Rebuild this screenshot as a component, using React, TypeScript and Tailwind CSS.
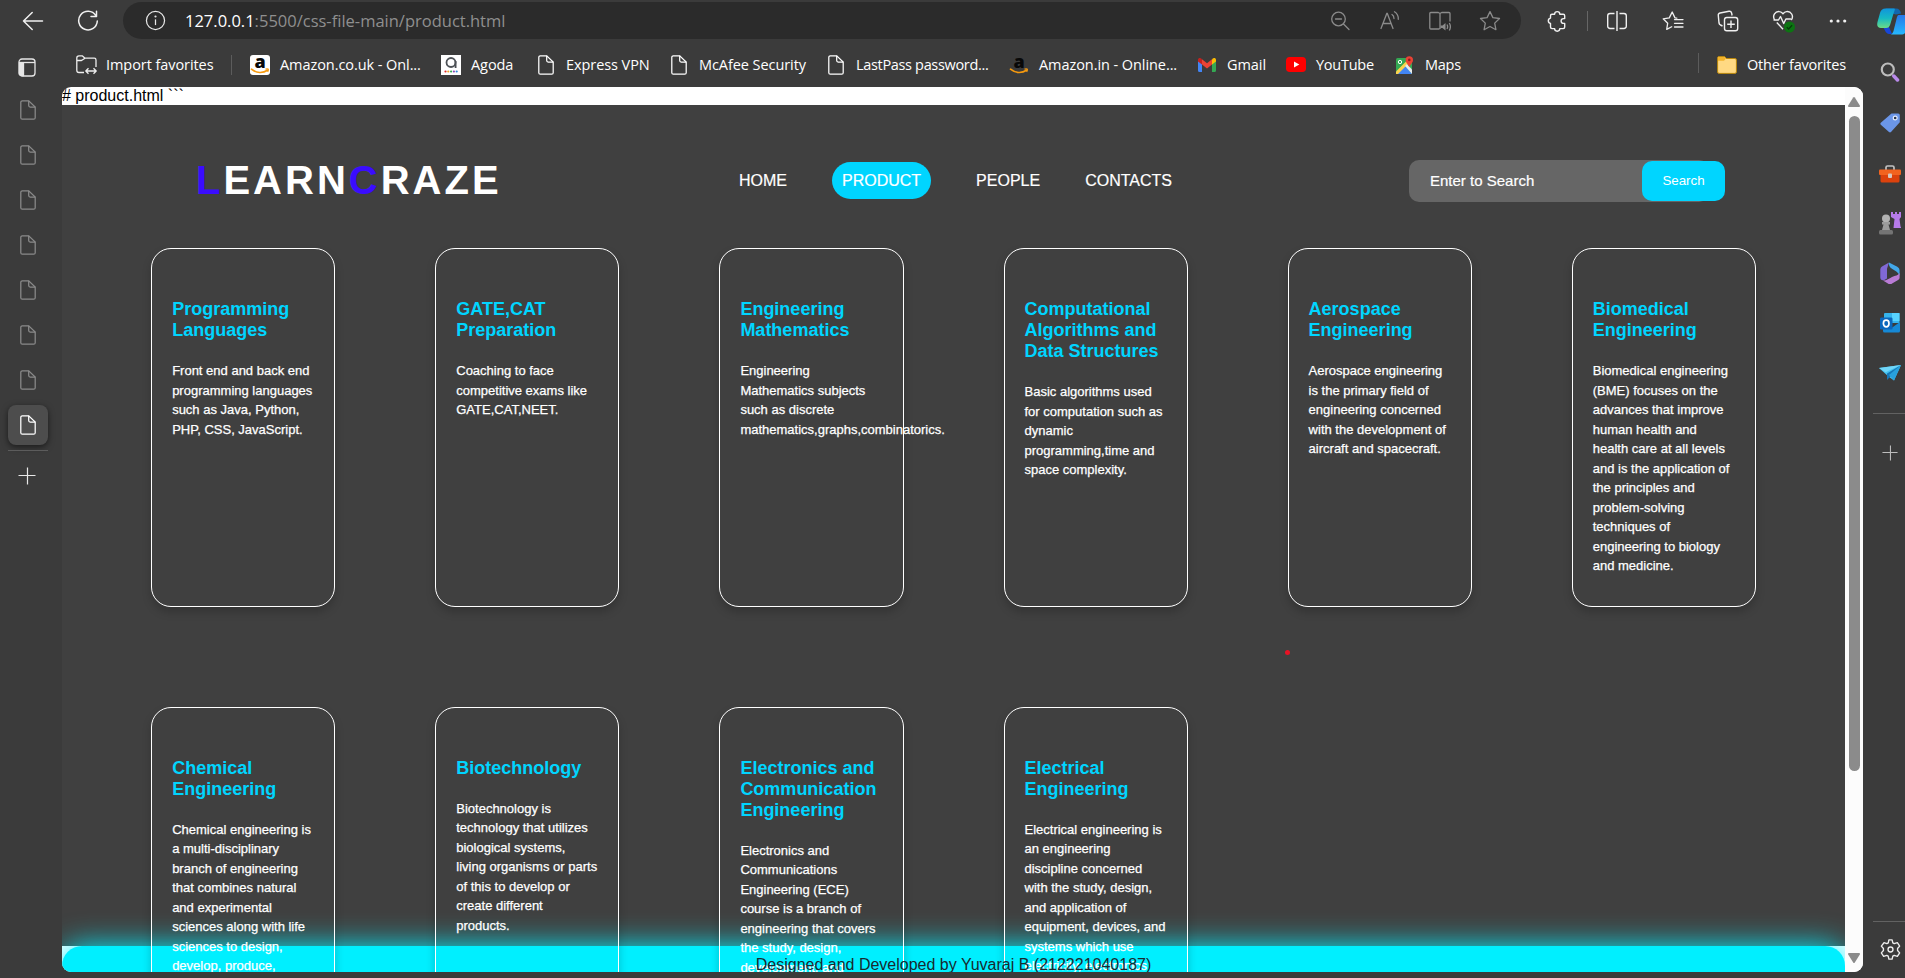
import React from "react";

type IconProps = { className?: string };

function FileIcon({ className = "" }: IconProps) {
  return (
    <svg viewBox="0 0 16 20" width="16" height="20" fill="none" stroke="currentColor" strokeWidth="1.25" className={className}>
      <path d="M2.3.8h6.4l6.5 6.3v10.6a1.5 1.5 0 0 1-1.5 1.5H2.3A1.5 1.5 0 0 1 .8 17.700V2.300A1.500 1.500 0 0 1 2.300.8Z" />
      <path d="M8.700.8v4.800a1.500 1.500 0 0 0 1.500 1.500h5" />
    </svg>
  );
}

function PlusIcon({ className = "" }: IconProps) {
  return (
    <svg viewBox="0 0 18 18" width="18" height="18" stroke="currentColor" strokeWidth="1.2" className={className}>
      <path d="M9.500 .5v17M.5 8.500h17" />
    </svg>
  );
}

function StarShape({ lines = false }: { lines?: boolean }) {
  return lines ? (
    <svg viewBox="0 0 22 22" width="22" height="22" fill="none" stroke="currentColor" strokeWidth="1.3" strokeLinejoin="round" strokeLinecap="round">
      <path d="M14.800 8.200 13 7.900 10.200 2 7.300 7.900 1.200 8.800l4.500 4.400-1 6.200 5-2.700" />
      <path d="M12.500 9.600h8.500M12.500 13.300h8.500M12.500 17h8.500" />
    </svg>
  ) : (
    <svg viewBox="0 0 22 22" width="22" height="22" fill="none" stroke="currentColor" strokeWidth="1.3" strokeLinejoin="round">
      <path d="m11 1.600 2.900 6 6.600.9-4.800 4.600 1.200 6.600-5.900-3.200-5.900 3.200 1.200-6.600L1.500 8.500l6.600-.9Z" />
    </svg>
  );
}

function AddressBar() {
  return (
    <div className="flex h-[37px] w-[1398px] items-center rounded-full bg-[#2b2b2b] pl-[22px] pr-[20px]">
      <svg viewBox="0 0 22 22" width="21" height="21" fill="none" stroke="#e8e8e8" strokeWidth="1.3">
        <circle cx="11" cy="11" r="9.500" />
        <path d="M11 9.800v6" />
        <circle cx="11" cy="6.800" r=".5" fill="#e8e8e8" />
      </svg>
      <div className="ml-[19px] flex-1 whitespace-nowrap text-[16.5px] leading-5 text-[#8f8f8f]">
        <span className="text-white">127.0.0.1</span>:5500/css-file-main/product.html
      </div>
      <div className="flex items-center gap-[28px] text-[#8b8b8b]">
        <svg viewBox="0 0 22 22" width="22" height="22" fill="none" stroke="currentColor" strokeWidth="1.3" strokeLinecap="round">
          <circle cx="9.500" cy="9" r="6.800" />
          <path d="m14.500 14 5.500 5.500M6.500 9h6" />
        </svg>
        <svg viewBox="0 0 22 22" width="22" height="22" fill="none" stroke="currentColor" strokeWidth="1.3" strokeLinecap="round">
          <path d="M2 18.500 7.800 3.500h.5l5.700 15M4 13.500h8M13 4.500c1.300.8 2 2.200 2 4M15.500 1.800c2.700 1.700 4 4.200 3.800 7.500" />
        </svg>
        <svg viewBox="0 0 22 22" width="22" height="22" fill="none" stroke="currentColor" strokeWidth="1.3" strokeLinejoin="round">
          <path d="M10.500 19H1.800a1 1 0 0 1-1-1V3.500a1 1 0 0 1 1-1h7.500l1.700 1 1.700-1H20a1 1 0 0 1 1 1v8M11 3.500V19" />
          <path d="M11.500 15.500h2l3-2.500v7.500l-3-2.500h-2Z" fill="currentColor" stroke="none" />
          <path d="M18 14.500c.8 1.300.8 3 0 4.500M20.300 13c1.400 2.300 1.400 5 0 7.500" />
        </svg>
        <StarShape />
      </div>
    </div>
  );
}

function Toolbar() {
  return (
    <div className="flex h-[41px] items-center pl-[22px] text-[#f0f0f0]">
      <svg viewBox="0 0 22 20" width="22" height="20" fill="none" stroke="currentColor" strokeWidth="1.500" strokeLinecap="round" strokeLinejoin="round">
        <path d="M20.500 10H1.500M10.200 1.500 1.500 10l8.700 8.500" />
      </svg>
      <svg viewBox="0 0 22 22" width="22" height="22" fill="none" stroke="currentColor" strokeWidth="1.500" strokeLinecap="round" strokeLinejoin="round" className="ml-[33px]">
        <path d="M18.800 5.500A9.300 9.300 0 1 0 20.300 11M19.500 1.200v5.300h-5.500" />
      </svg>
      <div className="ml-[24px]">
        <AddressBar />
      </div>
      <svg viewBox="0 0 22 22" width="22" height="22" fill="none" stroke="currentColor" strokeWidth="1.400" strokeLinejoin="round" className="ml-[25px]">
        <path d="M6 4.200h2.600a2.600 2.600 0 0 1 5.200 0h3.400a1.500 1.500 0 0 1 1.500 1.500v2.900h-1.200a2.400 2.400 0 0 0 0 4.800h1.200v3.700a1.500 1.500 0 0 1-1.500 1.500h-3.400a2.600 2.600 0 0 1-5.200 0H6a1.500 1.500 0 0 1-1.500-1.500v-3.700a2.700 2.700 0 0 1 0-5.300V5.700A1.500 1.500 0 0 1 6 4.200Z" />
      </svg>
      <div className="ml-[19px] h-5 w-px bg-[#666]" />
      <svg viewBox="0 0 22 22" width="22" height="22" fill="none" stroke="currentColor" strokeWidth="1.400" className="ml-[18px]">
        <path d="M8.500 3.500H4A2.300 2.300 0 0 0 1.700 5.800v10.400A2.300 2.300 0 0 0 4 18.500h4.500M13.500 3.500H18a2.300 2.300 0 0 1 2.300 2.300v10.400a2.300 2.300 0 0 1-2.300 2.300h-4.500M11 1v20" />
      </svg>
      <div className="ml-[34px]"><StarShape lines /></div>
      <svg viewBox="0 0 22 22" width="22" height="22" fill="none" stroke="currentColor" strokeWidth="1.400" strokeLinejoin="round" className="ml-[33px]">
        <rect x="7.500" y="7.500" width="13.200" height="13.200" rx="2.300" />
        <path d="M14 10.500v7.500M10.200 14.200h7.600M5.500 16 3.500 15a3 3 0 0 1-1.500-2L1.300 5.500A2.300 2.300 0 0 1 3 3l9-1.700a2.300 2.300 0 0 1 2.600 1.700l.5 2.500" />
      </svg>
      <svg viewBox="0 0 24 24" width="24" height="24" fill="none" stroke="currentColor" strokeWidth="1.400" strokeLinejoin="round" className="ml-[33px]">
        <path d="M2.700 11C-.2 6.500 3.500 2 7.500 2.600c1.600.2 2.700 1.200 3.500 2.200.8-1 1.900-2 3.500-2.200 4.500-.6 7.700 4.200 4.800 8.400M4.800 13.500l6.200 6.700M1.500 11h5l2-3.500 3.200 7 2.200-4.500h5" />
        <circle cx="17.500" cy="18" r="5.500" fill="#0c7412" stroke="none" />
        <path d="m14.800 18.200 1.800 1.800 3.500-3.700" stroke="#063b0a" strokeWidth="1.300" />
      </svg>
      <svg viewBox="0 0 18 4" width="18" height="4" fill="currentColor" className="ml-[33px]">
        <circle cx="2.300" cy="2" r="1.600" /><circle cx="9" cy="2" r="1.600" /><circle cx="15.700" cy="2" r="1.600" />
      </svg>
    </div>
  );
}

function Bookmark({ width, icon, label }: { width: string; icon: React.ReactNode; label: string }) {
  return (
    <div className={`flex shrink-0 items-center ${width}`}>
      <div className="flex w-5 justify-center">{icon}</div>
      <span className="ml-[10px] whitespace-nowrap">{label}</span>
    </div>
  );
}

function AmazonMark({ boxed = false }: { boxed?: boolean }) {
  return (
    <svg viewBox="0 0 20 20" width="20" height="20">
      {boxed && <rect width="20" height="20" rx="3" fill="#fff" />}
      <text x="10" y="12.500" textAnchor="middle" fontFamily="Open Sans, sans-serif" fontWeight="800" fontSize="18" fill="#080808">a</text>
      <path d="M1.500 14.200c5 4.200 11.500 4.200 16 1" fill="none" stroke="#f79a0e" strokeWidth="1.700" strokeLinecap="round" />
      <path d="M15.500 14.200c3.200-.8 3.500-.2 2.200 2.800" fill="none" stroke="#f79a0e" strokeWidth="1.200" />
    </svg>
  );
}

function BookmarksBar() {
  return (
    <div className="flex h-[46px] items-center pl-[24px] pt-px pr-[17px] text-[14.5px] tracking-[-0.07px] text-white">
      <Bookmark width="w-[155px]" label="Import favorites" icon={
        <svg viewBox="0 0 21 20" width="21" height="20" fill="none" stroke="#eee" strokeWidth="1.300" strokeLinejoin="round" className="shrink-0">
          <path d="M8 17.500H3A2.200 2.200 0 0 1 .8 15.300V3A2.200 2.200 0 0 1 3 .8h3.200L9 3.200h9.200a1.800 1.800 0 0 1 1.800 1.800v7M1 5.500h4.500L9 3.200" />
          <path d="M10 16h10M12.500 13.200 9.800 16l2.700 2.800M17.500 13.200l2.700 2.800-2.700 2.800" />
        </svg>} />
      <div className="h-5 w-px bg-[#5c5c5c]" />
      <div className="w-[18px]" />
      <Bookmark width="w-[191px]" icon={<AmazonMark boxed />} label="Amazon.co.uk - Onl..." />
      <Bookmark width="w-[95px]" label="Agoda" icon={
        <svg viewBox="0 0 20 20" width="20" height="20">
          <rect width="20" height="20" fill="#fff" />
          <circle cx="10" cy="7.500" r="4.500" fill="none" stroke="#4d5156" strokeWidth="1.800" />
          <path d="M14.600 6v7" stroke="#4d5156" strokeWidth="1.800" />
          <circle cx="4.500" cy="16.500" r="1.100" fill="#e12d2d" /><circle cx="7.300" cy="16.500" r="1.100" fill="#f0a52a" /><circle cx="10.100" cy="16.500" r="1.100" fill="#32a854" /><circle cx="12.900" cy="16.500" r="1.100" fill="#8e45b5" /><circle cx="15.700" cy="16.500" r="1.100" fill="#3088d8" />
        </svg>} />
      <Bookmark width="w-[133px]" icon={<FileIcon />} label="Express VPN" />
      <Bookmark width="w-[157px]" icon={<FileIcon />} label="McAfee Security" />
      <div className="flex tracking-[-0.33px]">
        <Bookmark width="w-[183px]" icon={<FileIcon />} label="LastPass password..." />
      </div>
      <Bookmark width="w-[188px]" icon={<AmazonMark />} label="Amazon.in - Online..." />
      <Bookmark width="w-[89px]" label="Gmail" icon={
        <svg viewBox="0 0 18 14" width="18" height="14">
          <path d="M0 2v10.500A1.500 1.500 0 0 0 1.500 14H4V4Z" fill="#4285f4" />
          <path d="M18 2v10.500a1.500 1.500 0 0 1-1.500 1.500H14V4Z" fill="#34a853" />
          <path d="M4 1.500v5L0 3.500V2C0 0 2.200-.5 3.500.7Z" fill="#c5221f" />
          <path d="M14 1.500v5l4-3V2c0-2-2.200-2.500-3.500-1.300Z" fill="#fbbc04" />
          <path d="m4 1.300 5 4 5-4v5.200l-5 4-5-4Z" fill="#ea4335" />
        </svg>} />
      <div className="flex flex-1 tracking-[-0.25px]">
        <Bookmark width="w-[109px]" label="YouTube" icon={
          <svg viewBox="0 0 20 15" width="20" height="15">
            <rect width="20" height="15" rx="3.800" fill="#f00" /><path d="m8 4.500 5.300 3-5.300 3Z" fill="#fff" />
          </svg>} />
        <Bookmark width="flex-1" label="Maps" icon={
          <svg viewBox="0 0 18 20" width="18" height="20">
            <rect y="3" width="16" height="16" rx="1.500" fill="#34a853" />
            <path d="M1 19 9 11l7 8Z" fill="#4285f4" /><path d="m0 16.500 11-11 2.500 2L2 19H0Z" fill="#fbd34d" />
            <path d="m9 11 2-2 5 5.500V19Z" fill="#e8eaed" />
            <circle cx="4" cy="7" r="1.700" fill="none" stroke="#fff" strokeWidth="1" />
            <path d="M9.600 5a3.700 3.700 0 1 1 7.400 0c0 3-2.700 4-3.700 7.500-1-3.500-3.700-4.500-3.700-7.500Z" fill="#ea4335" /><circle cx="13.300" cy="4.900" r="1.300" fill="#8f1d1d" />
          </svg>} />
      </div>
      <div className="mb-1 h-5 w-px bg-[#5c5c5c]" />
      <div className="w-[18px]" />
      <div className="flex tracking-[-0.2px]">
        <Bookmark width="w-[129px]" label="Other favorites" icon={
          <svg viewBox="0 0 20 18" width="20" height="18">
            <path d="M.6 5V2a1.400 1.400 0 0 1 1.400-1.400h5.500L9.500 2.500H18A1.400 1.400 0 0 1 19.400 4v12a1.400 1.400 0 0 1-1.400 1.400H2A1.400 1.400 0 0 1 .6 16Z" fill="#ffd983" stroke="#b8860b" strokeWidth="1" />
            <path d="M1 4.700V2A1 1 0 0 1 2 1h5.300l1.700 1.600-2 2.100Z" fill="#f3b32b" />
          </svg>} />
      </div>
    </div>
  );
}

function LeftRail() {
  return (
    <div className="flex w-[56px] shrink-0 flex-col items-center pt-[17px]">
      <svg viewBox="0 0 18 19" width="18" height="19" fill="none" stroke="#e6e6e6" strokeWidth="1.300" className="mr-[2px]">
        <rect x="1" y="1" width="16" height="17" rx="3" /><path d="M1 4.500h16" /><path d="M1.500 5H5.500v12.500H3.500a2 2 0 0 1-2-2Z" fill="#e6e6e6" />
      </svg>
      <div className="mt-[23px] flex flex-col gap-[25px] text-[#8a8a8a]">
        {[0, 1, 2, 3, 4, 5, 6].map((n) => (
          <FileIcon key={n} />
        ))}
      </div>
      <div className="mt-[15px] flex h-10 w-10 items-center justify-center rounded-lg bg-[#4d4d4d] text-white shadow-[0_2px_6px_rgba(0,0,0,0.55)]">
        <FileIcon />
      </div>
      <div className="mt-[5px] h-px w-10 bg-[#5c5c5c]" />
      <PlusIcon className="mt-[16px] mr-[2px] text-[#e8e8e8]" />
    </div>
  );
}

function RightRail() {
  return (
    <div className="flex w-[42px] shrink-0 flex-col items-center overflow-hidden pl-[12px]">
      <div className="flex h-[47px] items-center">
        <svg viewBox="0 0 32 27" width="32" height="27" className="mt-[-5px] ml-[5px] shrink-0">
          <defs>
            <linearGradient id="cpa" x1="0" y1="0" x2="0" y2="1"><stop offset="0" stopColor="#1195dc" /><stop offset=".5" stopColor="#16b9c4" /><stop offset="1" stopColor="#6bdc86" /></linearGradient>
            <linearGradient id="cpb" x1="0" y1="0" x2="0" y2="1"><stop offset="0" stopColor="#2877e8" /><stop offset="1" stopColor="#25b8ff" /></linearGradient>
          </defs>
          <path d="M9 .5h10c3 0 4.500 2 5 5l-5 1L9 4Z" fill="#1167ae" />
          <path d="M6 19h6l3 7h-3c-3 0-4-4-6-7Z" fill="#1746d8" />
          <path d="M8.500.5H17c2 0 0 3-.8 6l-3 10c-.7 2.500-2 3.500-4.200 3.500H4c-3 0-4.500-2-3.500-6l2.500-9c.8-3 2.500-4.500 5.500-4.500Z" fill="url(#cpa)" />
          <path d="M21.500 7H29c3 0 4 2.500 3 6l-2.500 9c-.8 3-2.500 4.500-5.500 4.500H13.500c2.500-.5 3-3.500 3.500-5.500l2.500-10c.5-2 .8-3.500 2-4Z" fill="url(#cpb)" />
        </svg>
      </div>
      <div className="flex flex-col items-center">
        <div className="flex h-[50px] items-center">
          <svg viewBox="0 0 20 20" width="20" height="20" fill="none"><circle cx="7.800" cy="7.500" r="6" stroke="#bdbdbd" strokeWidth="2.200" /><path d="m13.800 14 3.700 4" stroke="#b98aea" strokeWidth="3.500" strokeLinecap="round" /></svg>
        </div>
        <div className="flex h-[51px] items-center">
          <svg viewBox="0 0 20 20" width="20" height="20"><path d="M11.500.5h6.700A1.600 1.600 0 0 1 19.800 2v7.200L11 19a1.500 1.500 0 0 1-2 0L.8 11.800a1.500 1.500 0 0 1 0-2Z" fill="#6b96e8" /><circle cx="15.200" cy="5" r="1.900" fill="#28344b" stroke="#e5edff" strokeWidth="1.200" /></svg>
        </div>
        <div className="flex h-[51px] items-center">
          <svg viewBox="0 0 22 18" width="22" height="18"><path d="M7 5V2.500A1.500 1.500 0 0 1 8.500 1h5A1.500 1.500 0 0 1 15 2.500V5" fill="none" stroke="#c2c2c2" strokeWidth="1.700" /><rect x="0" y="4.500" width="22" height="5.500" rx="1" fill="#f2631f" /><path d="M1.500 10h19v6a1.500 1.500 0 0 1-1.500 1.500H3A1.500 1.500 0 0 1 1.500 16Z" fill="#dc420d" /><rect x="9" y="8.500" width="4" height="4.500" rx="1" fill="#d6c8c0" /></svg>
        </div>
        <div className="flex h-[49px] items-center">
          <svg viewBox="0 0 22 23" width="22" height="23"><path d="M12 0h2v2h2V0h2v2h2V0h2v5l-1.500 2 1 7.500 1 1.500h-8l1-9L12 5Z" fill="#b67bea" /><circle cx="7" cy="6.500" r="4" fill="#b2b2b2" /><path d="M3 10h8v2.500H9.500L11 18H3l1.500-5.500H3Z" fill="#9b9b9b" /><rect x="0" y="18" width="14" height="4.500" rx="1.500" fill="#747474" /></svg>
        </div>
        <div className="flex h-[50px] items-center">
          <svg viewBox="0 0 20 22" width="20" height="22">
            <path d="m9 .5-7 4A3.500 3.500 0 0 0 .3 7.500v8c0 2 1.700 3.500 4 2.500L7 16.500V6.800Z" fill="#8068d6" />
            <path d="m9 .5 8.300 4.300a4 4 0 0 1 2.300 3.500V14c-1-4-5-5.500-8-7.500-2.500-1.700-3-4-2.600-6Z" fill="#42a7e8" />
            <path d="M19.600 11v4.500c0 1.300-.6 2-1.500 2.500l-6 3.400a4 4 0 0 1-4.200 0L3 18.500c3 .4 6-2 9-3.500 3.500-1.500 6-1.500 7.600-4Z" fill="#b97bd5" />
            <path d="m10.200 7.300 3 1.700v3.800l-3 1.800-3-1.800V9Z" fill="#3b3b3b" />
          </svg>
        </div>
        <div className="flex h-[50px] items-center">
          <svg viewBox="0 0 20 20" width="20" height="20"><rect x="4" y="0" width="15.500" height="10" rx="1" fill="#36b4ec" /><path d="M12 0h7.500v8H12Z" fill="#58d3ff" /><path d="M3 9.500 11.500 15 20 9v9a1.500 1.500 0 0 1-1.500 1.500h-14A1.500 1.500 0 0 1 3 18Z" fill="#1689d6" /><rect x="0" y="4.500" width="12.500" height="12" rx="1.300" fill="#0a67bd" /><ellipse cx="6.200" cy="10.500" rx="2.800" ry="3.300" fill="none" stroke="#fff" strokeWidth="1.700" /></svg>
        </div>
        <div className="flex h-[50px] items-center">
          <svg viewBox="0 0 22 16" width="22" height="16"><path d="M0 3 22 0 15 15.500l-5.500-4Z" fill="#45c3f1" /><path d="m22 0-14 8.500V15l3-3Z" fill="#1678b8" /><path d="M0 3 22 0 6.500 7.200Z" fill="#70d6f9" /><path d="m10 10 12-10-7 15.500Z" fill="#28a1dd" /></svg>
        </div>
      </div>
      <div className="mt-[15px] h-px w-[34px] shrink-0 bg-[#626262]" />
      <PlusIcon className="mt-[31px] h-4 w-4 shrink-0 text-[#bdbdbd]" />
      <div className="flex-1" />
      <div className="h-px w-[34px] shrink-0 bg-[#626262]" />
      <svg viewBox="0 0 22 22" width="21" height="21" fill="none" stroke="#eee" strokeWidth="1.400" strokeLinejoin="round" className="mt-[17px] mb-[18px] shrink-0">
        <path d="m9.300 1-.6 3-1.500.9-3-1-2.800 3.500L3.600 10v2l-2.200 2.500 2.400 3.600 3.300-1 1.500.9.700 3h3.400l.7-3 1.500-.9 3.300 1 2.400-3.600-2.200-2.500v-2l2.200-2.600-2.400-3.500-3.300 1-1.500-.9-.7-3Z" />
        <circle cx="11" cy="11" r="2.600" />
      </svg>
    </div>
  );
}

const subjects: { title: string; text: string }[] = [
  { title: "Programming\nLanguages", text: "Front end and back end\nprogramming languages\nsuch as Java, Python,\nPHP, CSS, JavaScript." },
  { title: "GATE,CAT\nPreparation", text: "Coaching to face\ncompetitive exams like\nGATE,CAT,NEET." },
  { title: "Engineering\nMathematics", text: "Engineering\nMathematics subjects\nsuch as discrete\nmathematics,graphs,combinatorics." },
  { title: "Computational\nAlgorithms and\nData Structures", text: "Basic algorithms used\nfor computation such as\ndynamic\nprogramming,time and\nspace complexity." },
  { title: "Aerospace\nEngineering", text: "Aerospace engineering\nis the primary field of\nengineering concerned\nwith the development of\naircraft and spacecraft." },
  { title: "Biomedical\nEngineering", text: "Biomedical engineering\n(BME) focuses on the\nadvances that improve\nhuman health and\nhealth care at all levels\nand is the application of\nthe principles and\nproblem-solving\ntechniques of\nengineering to biology\nand medicine." },
  { title: "Chemical\nEngineering", text: "Chemical engineering is\na multi-disciplinary\nbranch of engineering\nthat combines natural\nand experimental\nsciences along with life\nsciences to design,\ndevelop, produce," },
  { title: "Biotechnology", text: "Biotechnology is\ntechnology that utilizes\nbiological systems,\nliving organisms or parts\nof this to develop or\ncreate different\nproducts." },
  { title: "Electronics and\nCommunication\nEngineering", text: "Electronics and\nCommunications\nEngineering (ECE)\ncourse is a branch of\nengineering that covers\nthe study, design,\ndevelopment, and" },
  { title: "Electrical\nEngineering", text: "Electrical engineering is\nan engineering\ndiscipline concerned\nwith the study, design,\nand application of\nequipment, devices, and\nsystems which use\nelectricity, electronics" },
];

function SubjectCard({ title, text }: { title: string; text: string }) {
  return (
    <article className="min-w-0 rounded-[20px] border border-white px-5 pt-[50px] shadow-[0_5px_10px_rgba(0,0,0,0.2)]">
      <h2 className="whitespace-pre text-[18px] font-bold leading-[21px] text-[#00d5ff]">{title}</h2>
      <p className="mt-5 whitespace-pre text-[13px] leading-[19.5px] text-white [-webkit-text-stroke:0.25px_white]">{text}</p>
    </article>
  );
}

function SiteHeader() {
  return (
    <header className="flex h-[143px] shrink-0 items-start">
      <h1 className="ml-[134px] mt-[52px] w-[543px] text-[40px] font-bold leading-[46px] tracking-[3px] text-white">
        <span className="text-[#3a0cff]">L</span>EARN<span className="text-[#3a0cff]">C</span>RAZE
      </h1>
      <nav className="mt-[57px] flex gap-[45px] text-[16px] leading-[37px] text-white [-webkit-text-stroke:0.2px_white]">
        <a>HOME</a>
        <a className="rounded-[20px] bg-[#00d5ff] px-[10px]">PRODUCT</a>
        <a>PEOPLE</a>
        <a>CONTACTS</a>
      </nav>
      <div className="ml-auto mr-[120px] mt-[55px] flex h-[42px] w-[316px] items-center">
        <div className="h-[42px] w-[300px] shrink-0 rounded-[10px] bg-[#666] pl-[21px] text-[15px] leading-[41px] text-white [-webkit-text-stroke:0.2px_white]">Enter to Search</div>
        <button className="-ml-[67px] h-10 w-[83px] shrink-0 rounded-[10px] bg-[#00d5ff] text-[13.33px] leading-10 text-white">Search</button>
      </div>
    </header>
  );
}

function WebPage() {
  return (
    <div className="flex h-[885px] w-[1801px] overflow-hidden rounded-[9px] bg-white font-['Liberation_Sans',Arial,sans-serif]">
      <div className="relative flex w-[1783px] flex-col overflow-hidden">
        <div className="h-[18px] shrink-0 whitespace-pre text-[16px] leading-[18px] text-black"># product.html ```</div>
        <main className="flex h-[841px] shrink-0 flex-col bg-[#404040]">
          <SiteHeader />
          <section className="relative z-10 grid auto-rows-[358.5px] grid-cols-6 gap-[100px] px-[89.15px]">
            {subjects.map((s) => (
              <SubjectCard key={s.title} title={s.title} text={s.text} />
            ))}
            <i className="absolute left-[1223px] top-[402px] h-[5px] w-[5px] rounded-full bg-[#e81224]" />
          </section>
        </main>
        <footer className="h-[50px] shrink-0 rounded-[20px] bg-[#00efff] shadow-[0_0_30px_#00efff]">
          <p className="relative z-20 pt-[10px] text-center text-[16px] leading-[18px] text-[#182a30]">Designed and Developed by Yuvaraj B (212221040187)</p>
        </footer>
      </div>
      <div className="flex w-[18px] flex-col items-center bg-[#fcfcfc] pt-[10px] pb-[9px]">
        <svg viewBox="0 0 12 10" width="12" height="10" fill="#8b8b8b"><path d="M5.200.6a1 1 0 0 1 1.600 0L11.800 8.500a1 1 0 0 1-.8 1.500H1A1 1 0 0 1 .2 8.500Z" /></svg>
        <div className="mt-[9px] h-[655px] w-[11px] rounded-full bg-[#8b8b8b]" />
        <svg viewBox="0 0 12 10" width="12" height="10" fill="#8b8b8b" className="mt-auto"><path d="M5.200 9.400a1 1 0 0 0 1.600 0L11.800 1.500A1 1 0 0 0 11 0H1A1 1 0 0 0 .2 1.500Z" /></svg>
      </div>
    </div>
  );
}

export default function App() {
  return (
    <div className="flex h-[978px] w-[1905px] overflow-hidden bg-[#3b3b3b] font-['Open_Sans','Noto_Sans',sans-serif]">
      <div className="flex w-[1863px] shrink-0 flex-col">
        <Toolbar />
        <div className="flex flex-1">
          <LeftRail />
          <div className="-ml-1 flex w-[1811px] flex-col">
            <BookmarksBar />
            <div className="ml-[10px]">
              <WebPage />
            </div>
          </div>
        </div>
      </div>
      <RightRail />
    </div>
  );
}
